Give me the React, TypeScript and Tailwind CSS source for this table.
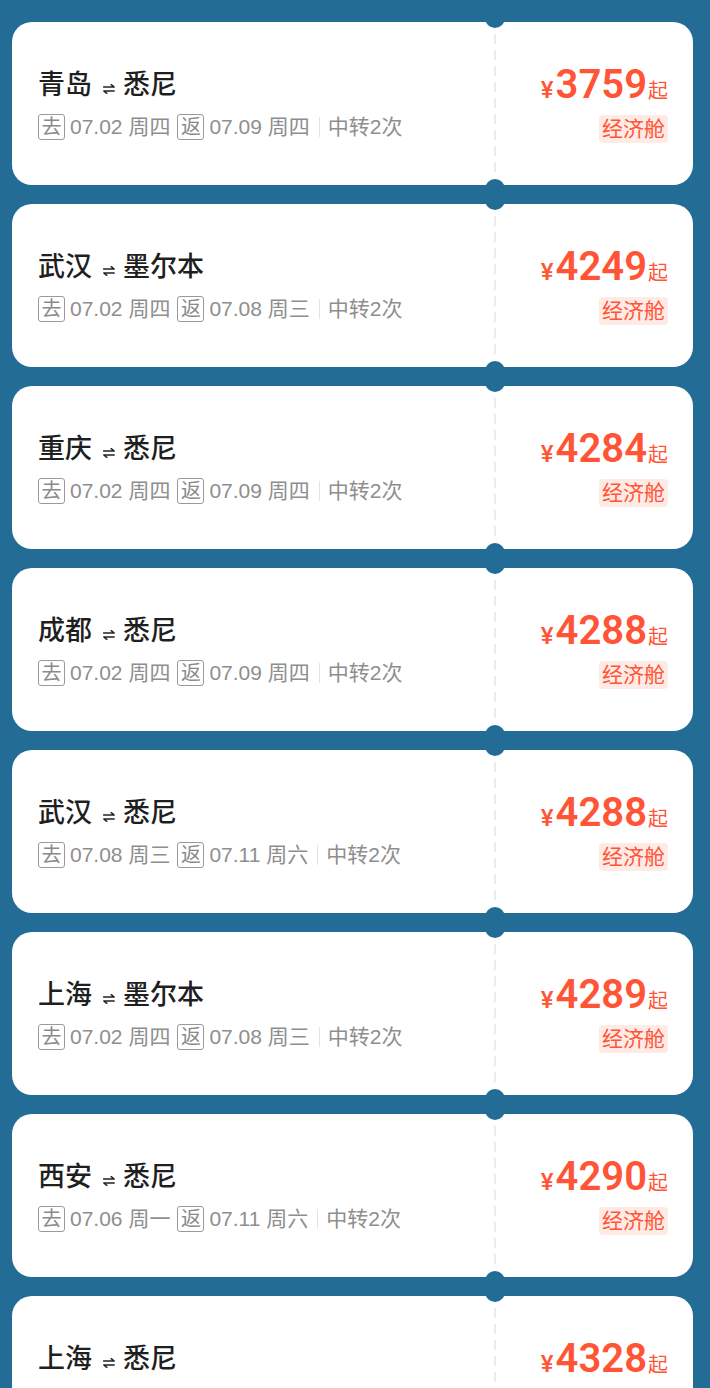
import React from "react";

type Item = {
  from: string;
  to: string;
  go: string;
  back: string;
  price: string;
};

const items: Item[] = [
  { from: "青岛", to: "悉尼", go: "07.02 周四", back: "07.09 周四", price: "3759" },
  { from: "武汉", to: "墨尔本", go: "07.02 周四", back: "07.08 周三", price: "4249" },
  { from: "重庆", to: "悉尼", go: "07.02 周四", back: "07.09 周四", price: "4284" },
  { from: "成都", to: "悉尼", go: "07.02 周四", back: "07.09 周四", price: "4288" },
  { from: "武汉", to: "悉尼", go: "07.08 周三", back: "07.11 周六", price: "4288" },
  { from: "上海", to: "墨尔本", go: "07.02 周四", back: "07.08 周三", price: "4289" },
  { from: "西安", to: "悉尼", go: "07.06 周一", back: "07.11 周六", price: "4290" },
  { from: "上海", to: "悉尼", go: "07.02 周四", back: "07.09 周四", price: "4328" },
];

function Arrow() {
  return (
    <svg width="12" height="10" viewBox="0 0 12 10" className="ml-[11px] mr-[8px] mt-[8px]" fill="none">
      <path d="M0.5 3 H11.2 L8.2 0.6" stroke="#222" strokeWidth="1.5" strokeLinecap="round" strokeLinejoin="round" />
      <path d="M11.2 7 H0.8 L3.8 9.4" stroke="#222" strokeWidth="1.5" strokeLinecap="round" strokeLinejoin="round" />
    </svg>
  );
}

function Tag({ label }: { label: string }) {
  return (
    <span className="flex h-[26px] w-[27px] items-center justify-center rounded-[3px] border border-[#9a9a9a] text-[20px] leading-none text-[#8a8a8a]">
      {label}
    </span>
  );
}

function Card({ item }: { item: Item }) {
  return (
    <div className="flex h-[163px] w-[681px] shrink-0 rounded-[20px] bg-white">
      <div className="flex flex-1 flex-col justify-center pl-[26px]">
        <div className="flex h-[36px] items-center text-[27px] font-medium leading-[36px] text-[#1f1f1f]">
          <span>{item.from}</span>
          <Arrow />
          <span>{item.to}</span>
        </div>
        <div className="mt-[10px] flex h-[28px] items-center text-[21px] leading-none text-[#8e8e8e]">
          <Tag label="去" />
          <span className="ml-[5px]">{item.go}</span>
          <span className="ml-[7px]">
            <Tag label="返" />
          </span>
          <span className="ml-[5px]">{item.back}</span>
          <span className="ml-[9px] h-[20px] w-px bg-[#e3e3e3]" />
          <span className="ml-[8px]">中转2次</span>
        </div>
      </div>
      <div className="relative w-[2px] self-stretch">
        <div className="absolute left-1/2 top-[-14px] h-[20px] w-[20px] -translate-x-1/2 rounded-full bg-[#236c96]" />
        <div className="absolute bottom-[-14px] left-1/2 h-[20px] w-[20px] -translate-x-1/2 rounded-full bg-[#236c96]" />
        <div className="absolute inset-x-0 bottom-[12px] top-[12px] bg-[linear-gradient(to_bottom,#ececec_60%,transparent_60%)] bg-[length:2px_16px]" />
      </div>
      <div className="flex w-[197px] flex-col items-end justify-center pr-[25px]">
        <div className="flex h-[40px] items-baseline text-[#ff5436]">
          <span className="font-['Roboto',sans-serif] text-[24px] font-medium leading-[40px]">¥</span>
          <span className="ml-[2px] font-['Roboto',sans-serif] text-[40px] font-semibold leading-[40px]">{item.price}</span>
          <span className="ml-[1px] text-[20px] leading-[40px]">起</span>
        </div>
        <div className="mt-[10px] flex h-[28px] items-center rounded-[4px] bg-[#ffebe6] px-[3px] text-[21px] leading-none text-[#ff5436]">
          经济舱
        </div>
      </div>
    </div>
  );
}

export default function App() {
  return (
    <div className="h-[1388px] w-[710px] overflow-hidden bg-[#236c96] font-['Liberation_Sans','Noto_Sans_CJK_SC',sans-serif]">
      <div className="flex flex-col gap-[19px] pl-[12px] pt-[22px]">
        {items.map((it, i) => (
          <Card key={i} item={it} />
        ))}
      </div>
    </div>
  );
}
